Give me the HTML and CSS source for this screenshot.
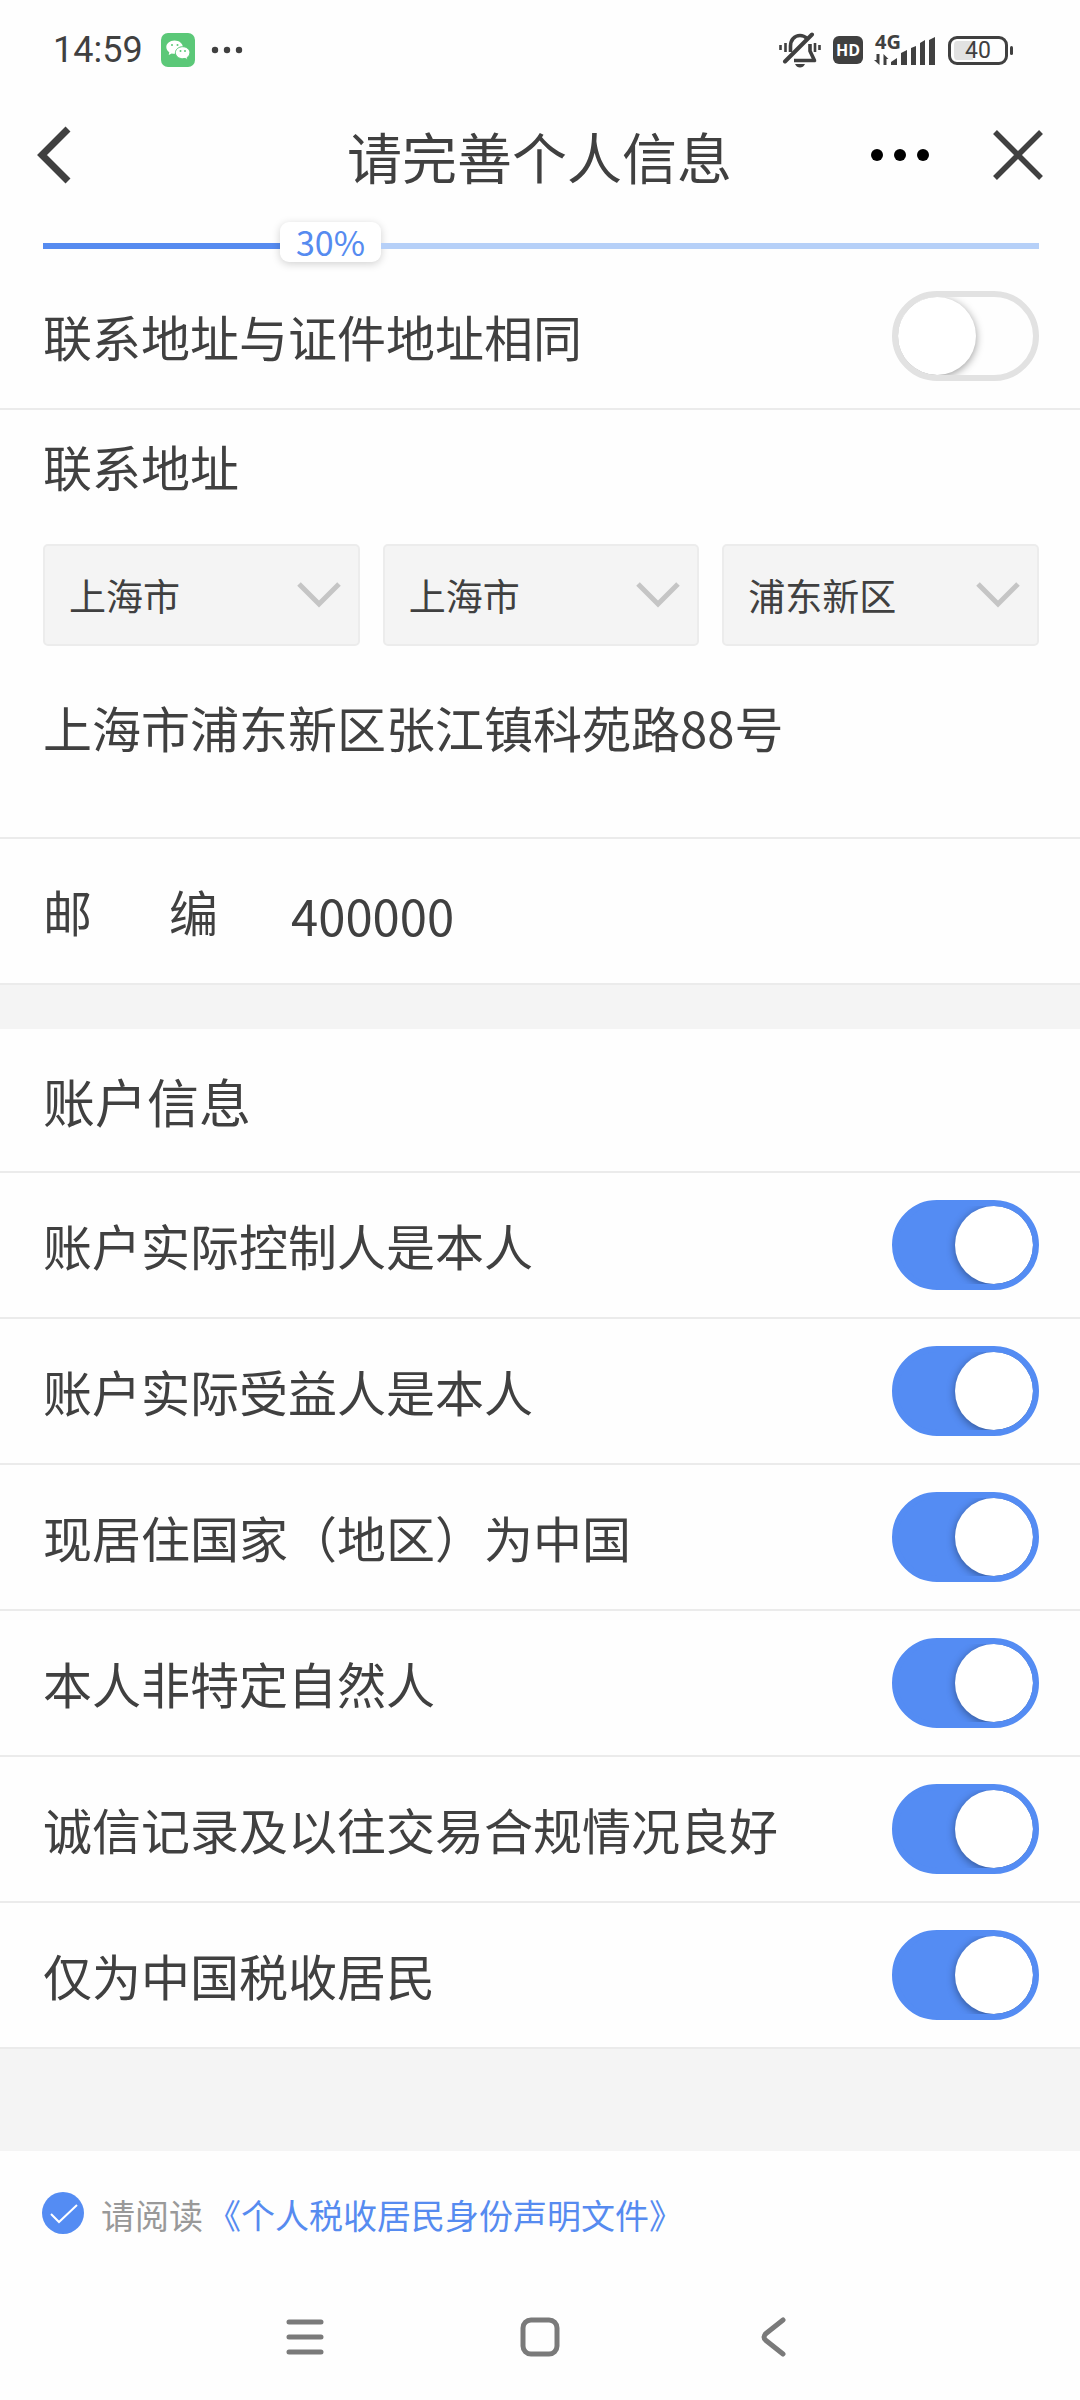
FILE: index.html
```html
<!DOCTYPE html>
<html lang="zh-CN">
<head>
<meta charset="utf-8">
<meta name="viewport" content="width=device-width, initial-scale=1">
<title>请完善个人信息</title>
<link rel="stylesheet" href="styles.css">
</head>
<body>
<div class="status">
  <span class="time">14:59</span>
  <svg class="wechat" width="34" height="34" viewBox="0 0 34 34" aria-hidden="true">
    <rect width="34" height="34" rx="7" fill="#5bc878"/>
    <path d="M13.500 7.500c-4.700 0-8.200 3-8.200 6.600 0 2.100 1.200 4 3 5.200l-.6 2.700 3-1.600c.9.200 1.800.4 2.800.4 4.700 0 8.300-3 8.300-6.700S18.200 7.500 13.500 7.500z" fill="#fff"/>
    <path d="M21.700 13.700c-4.100 0-7.300 2.700-7.300 6s3.200 6 7.300 6c.9 0 1.700-.1 2.500-.3l2.500 1.400-.5-2.300c1.600-1.200 2.700-2.900 2.700-4.800 0-3.300-3.200-6-7.200-6z" fill="#fff" stroke="#5bc878"/>
    <g fill="#5bc878"><circle cx="11" cy="12" r="1"/><circle cx="16.500" cy="12" r="1"/><circle cx="19.500" cy="18" r="1"/><circle cx="24" cy="18" r="1"/></g>
  </svg>
  <svg class="more-apps" width="32" height="8" viewBox="0 0 32 8" fill="#404040" aria-hidden="true"><circle cx="4" cy="4" r="3.200"/><circle cx="16" cy="4" r="3.200"/><circle cx="28" cy="4" r="3.200"/></svg>
  <div class="signals">
    <svg width="42" height="36" viewBox="0 0 42 36" fill="none" stroke="#404040" stroke-width="3.600" stroke-linejoin="round" aria-hidden="true">
      <path d="M11.500 20v-6c0-6 4-10.500 9.500-10.500 3 0 5 1 7 3M31 12v7l4.500 9.500H15"/>
      <path d="M6 29.500L33 2.500" stroke-width="4" stroke-linecap="round"/>
      <path d="M16 32h10c-1 2.500-3 3.500-5 3.500s-4-1-5-3.500z" fill="#404040" stroke="none"/>
      <path d="M1.500 13v5M6.500 11v9M36 11v9M40.500 13v5" stroke-width="2.600"/>
    </svg>
    <span class="hd">HD</span>
    <span class="network">
      <span class="gen">4G</span>
      <svg width="62" height="32" viewBox="0 0 62 32" fill="#404040" aria-hidden="true">
        <path d="M5.500 20v11L0 26h2.500v-6zM9.500 31V20l5 5h-2v6z"/>
        <path d="M17 31v-3l6-4v7zM27 31V19l6-3v15zM37 31V14l5-2v19zM46 31V9l5-3v25zM55 31V6l6-3v28z"/>
      </svg>
    </span>
    <span class="battery">40</span>
  </div>
</div>

<header class="titlebar">
  <button class="icon-btn" type="button" aria-label="返回">
    <svg width="36" height="60" viewBox="0 0 36 60" fill="none" stroke="#404040" stroke-width="7"><path d="M32 4L6 30l26 26"/></svg>
  </button>
  <h1>请完善个人信息</h1>
  <div class="actions">
    <button class="icon-btn" type="button" aria-label="更多">
      <svg width="60" height="14" viewBox="0 0 60 14"><circle cx="7" cy="7" r="6"/><circle cx="30" cy="7" r="6"/><circle cx="53" cy="7" r="6"/></svg>
    </button>
    <button class="icon-btn" type="button" aria-label="关闭">
      <svg width="50" height="50" viewBox="0 0 50 50" stroke="#404040" stroke-width="5.500"><path d="M2 2l46 46M48 2L2 48"/></svg>
    </button>
  </div>
</header>

<div class="progress">
  <div class="done"></div>
  <span class="percent">30%</span>
  <div class="rest"></div>
</div>

<main>
  <section>
    <label class="row">联系地址与证件地址相同<input class="switch" type="checkbox" role="switch"></label>
    <div class="address">
      <h2 class="field-title">联系地址</h2>
      <div class="regions">
        <select aria-label="省"><option>上海市</option></select>
        <select aria-label="市"><option>上海市</option></select>
        <select aria-label="区"><option>浦东新区</option></select>
      </div>
      <input class="street" type="text" aria-label="详细地址" value="上海市浦东新区张江镇科苑路88号">
    </div>
    <div class="row postal">
      <label class="spread" for="zip"><span>邮</span><span>编</span></label>
      <input id="zip" type="text" inputmode="numeric" value="400000">
    </div>
  </section>

  <section class="account">
    <h2 class="row heading">账户信息</h2>
    <label class="row">账户实际控制人是本人<input class="switch" type="checkbox" role="switch" checked></label>
    <label class="row">账户实际受益人是本人<input class="switch" type="checkbox" role="switch" checked></label>
    <label class="row">现居住国家（地区）为中国<input class="switch" type="checkbox" role="switch" checked></label>
    <label class="row">本人非特定自然人<input class="switch" type="checkbox" role="switch" checked></label>
    <label class="row">诚信记录及以往交易合规情况良好<input class="switch" type="checkbox" role="switch" checked></label>
    <label class="row">仅为中国税收居民<input class="switch" type="checkbox" role="switch" checked></label>
  </section>
</main>

<div class="agreement">
  <input id="agree" class="tick" type="checkbox" checked>
  <p><label for="agree">请阅读</label><a href="#">《个人税收居民身份声明文件》</a></p>
</div>

<nav class="sysnav" aria-label="系统导航">
  <button class="icon-btn" type="button" aria-label="最近任务">
    <svg width="40" height="40" viewBox="0 0 40 40" stroke="#7a7a7a" stroke-width="5" stroke-linecap="round"><path d="M4 5h32M4 20h32M4 35h32"/></svg>
  </button>
  <button class="icon-btn" type="button" aria-label="主页">
    <svg width="40" height="40" viewBox="0 0 40 40" fill="none" stroke="#7a7a7a" stroke-width="5"><rect x="3" y="3" width="34" height="34" rx="8"/></svg>
  </button>
  <button class="icon-btn" type="button" aria-label="后退">
    <svg width="40" height="40" viewBox="0 0 40 40" fill="none" stroke="#7a7a7a" stroke-width="5" stroke-linecap="round"><path d="M28 3L11 16.500Q7 20 11 23.500L28 37"/></svg>
  </button>
</nav>
</body>
</html>
```
FILE: styles.css
```css
* {
  box-sizing: border-box;
}

body {
  margin: 0;
  background: #fefefe;
  color: #404040;
  font: 49px/72px "Noto Sans CJK SC", sans-serif;
}

h1,
h2,
p {
  margin: 0;
  font-weight: 400;
}

input,
select,
button {
  margin: 0;
  padding: 0;
  border: 0;
  background: none;
  color: inherit;
  font: inherit;
}

svg {
  display: block;
}

.icon-btn {
  display: flex;
}

/* Status bar */
.status {
  display: flex;
  align-items: center;
  height: 100px;
  padding: 0 72px 0 53px;
}

.time {
  font: 400 36px/40px Roboto, sans-serif;
}

.wechat {
  margin-left: 18px;
}

.more-apps {
  margin-left: 16px;
}

.signals {
  display: flex;
  align-items: center;
  margin-left: auto;
}

.hd {
  width: 30px;
  margin-left: 12px;
  border-radius: 6px;
  background: #404040;
  color: #fff;
  font: 700 16px/28px "Open Sans", sans-serif;
  text-align: center;
}

.network {
  position: relative;
  margin-left: 11px;
}

.gen {
  position: absolute;
  top: -2px;
  left: 1px;
  font: 700 20px/20px "Open Sans", sans-serif;
}

.battery {
  position: relative;
  width: 60px;
  margin-left: 12px;
  border: 3px solid #404040;
  border-radius: 9px;
  background: linear-gradient(90deg, #e2e2e2 40%, transparent 40%) content-box;
  padding: 2px 3px;
  font: 400 23px/19px Roboto, sans-serif;
  text-align: center;
}

.battery::after {
  content: "";
  position: absolute;
  top: 7px;
  right: -8px;
  width: 3px;
  height: 9px;
  border-radius: 2px;
  background: #404040;
}

/* Title bar */
.titlebar {
  display: grid;
  grid-template-columns: 1fr auto 1fr;
  align-items: center;
  height: 110px;
  padding: 0 37px 0 36px;
}

.titlebar h1 {
  font-size: 55px;
  line-height: 80px;
}

.actions {
  display: flex;
  align-items: center;
  justify-content: flex-end;
  gap: 63px;
}

/* Progress */
.progress {
  display: flex;
  align-items: center;
  height: 54px;
  padding: 18px 41px 0 43px;
}

.done,
.rest {
  height: 6px;
}

.done {
  flex: 237;
  background: #568bf0;
}

.rest {
  flex: 658;
  background: #b6d0f8;
}

.percent {
  width: 101px;
  margin: -4px 0 4px;
  border-radius: 9px;
  background: #fff;
  box-shadow: 0 2px 9px rgba(0, 0, 0, 0.18);
  color: #568bf0;
  font-size: 34px;
  line-height: 40px;
  text-align: center;
}

/* Form rows */
.row {
  display: flex;
  align-items: center;
  justify-content: space-between;
  height: 146px;
  padding: 0 41px 0 43px;
  border-bottom: 2px solid #ebebeb;
}

.heading {
  height: 144px;
  padding-top: 2px;
  font-size: 52px;
}

.account {
  border-top: 44px solid #f4f4f4;
  border-bottom: 102px solid #f4f4f4;
}

.switch {
  appearance: none;
  width: 147px;
  height: 90px;
  border: 6px solid #e2e2e2;
  border-radius: 45px;
  overflow: hidden;
}

.switch::before {
  content: "";
  display: block;
  width: 78px;
  height: 78px;
  border-radius: 50%;
  background: #fff;
  box-shadow: 0 2px 9px rgba(0, 0, 0, 0.4);
}

.switch:checked {
  border-color: #548cf3;
  background: #548cf3;
}

.switch:checked::before {
  margin-left: auto;
}

.address {
  padding: 20px 41px 74px 43px;
  border-bottom: 2px solid #ebebeb;
}

.field-title {
  font-size: 49px;
}

.regions {
  display: grid;
  grid-template-columns: repeat(3, 1fr);
  gap: 23px;
  margin: 42px 0 43px;
}

.regions select {
  appearance: none;
  height: 102px;
  padding: 0 24px;
  border: 2px solid #ececec;
  border-radius: 5px;
  background: #f4f4f4 url("data:image/svg+xml,%3Csvg xmlns='http://www.w3.org/2000/svg' width='44' height='28' fill='none' stroke='%23c5c5c5' stroke-width='5'%3E%3Cpath d='M2 3l20 20L42 3'/%3E%3C/svg%3E") no-repeat right 17px center;
  font-size: 37px;
}

.street {
  display: block;
  width: 100%;
  height: 74px;
}

.postal {
  justify-content: flex-start;
  gap: 73px;
}

.spread {
  display: flex;
  justify-content: space-between;
  width: 175px;
}

.postal input {
  flex: 1;
  min-width: 0;
  padding-top: 8px;
}

/* Agreement */
.agreement {
  display: flex;
  align-items: center;
  gap: 17px;
  padding: 35px 42px;
  color: #999;
  font-size: 34px;
  line-height: 50px;
}

.agreement p {
  padding-top: 4px;
}

.agreement a {
  margin-left: 4px;
  color: #568bf0;
  text-decoration: none;
}

.tick {
  appearance: none;
  width: 42px;
  height: 42px;
  border-radius: 50%;
  background: #ccc;
}

.tick:checked {
  background: #548cf3 url("data:image/svg+xml,%3Csvg xmlns='http://www.w3.org/2000/svg' width='42' height='42' fill='none' stroke='white' stroke-width='2'%3E%3Cpath d='M9 22l8 8 18-17'/%3E%3C/svg%3E") center;
}

/* System navigation */
.sysnav {
  display: flex;
  align-items: center;
  justify-content: center;
  gap: 195px;
  height: 124px;
}
```
